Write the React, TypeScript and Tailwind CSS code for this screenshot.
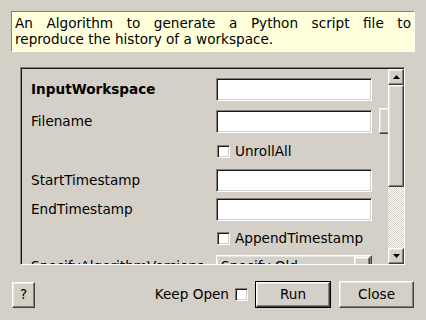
import React from 'react';

const raised =
  'border border-t-white border-l-white border-r-[#404040] border-b-[#404040] shadow-[inset_-1px_-1px_#808080,inset_1px_1px_#e8e6e0] bg-[#d4d0c8]';
const sunken =
  'border border-t-[#808080] border-l-[#808080] border-r-white border-b-white shadow-[inset_1px_1px_#1a1a1a,inset_-1px_-1px_#d4d0c8] bg-white';

const TextRow: React.FC<{ label: string; bold?: boolean; browse?: boolean; className?: string }> = ({
  label,
  bold,
  browse,
  className,
}) => (
  <div className={`flex items-center ${browse ? 'h-[26px]' : 'h-[23px]'} ${className ?? ''}`}>
    <div className={`w-[185px] shrink-0 whitespace-nowrap ${bold ? 'font-bold' : ''}`}>{label}</div>
    <div className={`w-[156px] h-[23px] shrink-0 ${sunken}`} />
    {browse && <div className={`ml-[7px] w-[40px] h-[26px] shrink-0 ${raised}`} />}
  </div>
);

const CheckRow: React.FC<{ label: string; className?: string }> = ({ label, className }) => (
  <div className={`flex items-center h-[20px] pl-[186px] ${className ?? ''}`}>
    <div className={`w-[13px] h-[13px] shrink-0 ${sunken}`} />
    <span className="ml-[5px] whitespace-nowrap">{label}</span>
  </div>
);

const Arrow: React.FC<{ up?: boolean }> = ({ up }) => (
  <svg width="7" height="4" viewBox="0 0 7 4">
    {up ? <polygon points="3.5,0 7,4 0,4" fill="#000" /> : <polygon points="0,0 7,0 3.5,4" fill="#000" />}
  </svg>
);

export default function App() {
  return (
    <div className="w-[426px] h-[320px] bg-[#d4d0c8] font-['DejaVu_Sans',sans-serif] text-[13.6px] text-black flex flex-col overflow-hidden">
      {/* Description */}
      <div className="mt-[11px] mx-[11px] h-[41px] border border-t-[#808080] border-l-[#808080] border-r-white border-b-white bg-[#ffffdc] pl-[3px] pr-[3px] pt-[3px] leading-[16px]">
        <div className="text-justify [text-align-last:justify] whitespace-nowrap flex justify-between">
          {'An Algorithm to generate a Python script file to'.split(' ').map((w, i) => (
            <span key={i}>{w}</span>
          ))}
        </div>
        <div>reproduce the history of a workspace.</div>
      </div>

      {/* Scroll area */}
      <div className="mt-[15px] ml-[20px] w-[385px] h-[198px] border border-t-[#808080] border-l-[#808080] border-r-white border-b-white flex overflow-hidden">
        <div className="flex flex-1 min-w-0 shadow-[inset_1px_1px_#1a1a1a] pt-[1px] pl-[1px]">
          <div className="flex-1 min-w-0 overflow-hidden pl-[9px] pt-[9px]">
            <TextRow label="InputWorkspace" bold />
            <TextRow label="Filename" browse className="mt-[7px]" />
            <CheckRow label="UnrollAll" className="mt-[7px]" />
            <TextRow label="StartTimestamp" className="mt-[8px]" />
            <TextRow label="EndTimestamp" className="mt-[6px]" />
            <CheckRow label="AppendTimestamp" className="mt-[7px]" />
            <div className="flex items-center h-[23px] mt-[7px]">
              <div className="w-[185px] shrink-0 whitespace-nowrap">SpecifyAlgorithmVersions</div>
              <div className={`w-[156px] h-[23px] shrink-0 flex items-center ${raised}`}>
                <span className="flex-1 pl-[4px] whitespace-nowrap">Specify Old</span>
                <div className={`w-[16px] h-[19px] mr-[1px] ${raised}`} />
              </div>
            </div>
          </div>
          {/* Scrollbar */}
          <div className="w-[16px] flex flex-col shrink-0">
            <div className={`h-[16px] shrink-0 flex items-center justify-center ${raised}`}>
              <Arrow up />
            </div>
            <div className={`h-[102px] shrink-0 ${raised}`} />
            <div className="flex-1 bg-[image:repeating-conic-gradient(#d4d0c8_0_25%,#ffffff_0_50%)] bg-[size:2px_2px]" />
            <div className={`h-[16px] shrink-0 flex items-center justify-center ${raised}`}>
              <Arrow />
            </div>
          </div>
        </div>
      </div>

      {/* Buttons */}
      <div className="mt-[16px] flex items-center">
        <div className={`ml-[12px] w-[23px] h-[26px] flex items-center justify-center ${raised}`}>?</div>
        <span className="ml-auto">Keep Open</span>
        <div className={`ml-[6px] w-[13px] h-[13px] ${sunken}`} />
        <div className="ml-[7px] w-[76px] h-[27px] border border-black">
          <div className={`w-full h-full flex items-center justify-center ${raised}`}>Run</div>
        </div>
        <div className={`ml-[8px] mr-[12px] w-[75px] h-[27px] flex items-center justify-center ${raised}`}>Close</div>
      </div>
    </div>
  );
}
